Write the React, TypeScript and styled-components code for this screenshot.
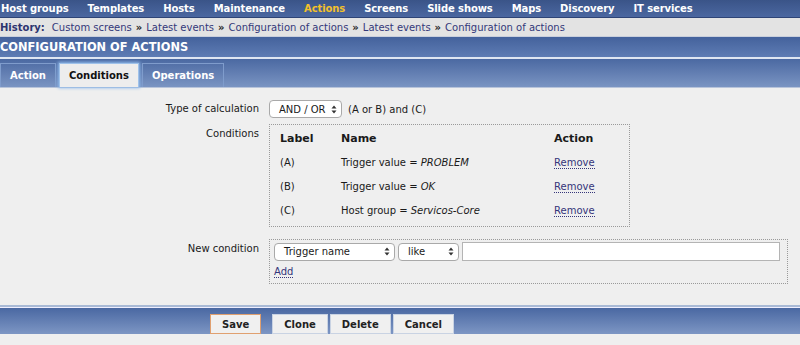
import { FC } from 'react';
import styled, { createGlobalStyle } from 'styled-components';

const GlobalStyle = createGlobalStyle`
  html, body {
    margin: 0;
    padding: 0;
    background: #efefef;
    font-family: 'DejaVu Sans', Verdana, sans-serif;
    font-size: 10px;
    color: #1a1a1a;
  }
`;

const MainMenu = styled.div`
  display: flex;
  gap: 19px;
  height: 17px;
  align-items: center;
  padding: 0 0 0 1px;
  background: linear-gradient(#3a5488, #4b67a0);
  border-bottom: 1px solid #2e4476;
`;

const MenuItem = styled.span<{ $active?: boolean }>`
  font-weight: bold;
  font-size: 10px;
  letter-spacing: -0.1px;
  color: ${({ $active }) => ($active ? '#f3c12a' : '#ffffff')};
  white-space: nowrap;
`;

const History = styled.div`
  display: flex;
  align-items: center;
  height: 18px;
  font-size: 10px;
  background: #e3e3e3;
  color: #2d3470;
  border-bottom: 1px solid #c9cfdc;
  white-space: nowrap;
`;

const HistoryTitle = styled.span`
  font-weight: bold;
  margin-right: 7px;
`;

const Crumb = styled.span`
  color: #34397a;
`;

const Sep = styled.span`
  margin: 0 4px;
  font-weight: bold;
  color: #222;
`;

const Header = styled.div`
  height: 20px;
  display: flex;
  align-items: center;
  background: linear-gradient(#44629c, #5e7cb4);
  color: #fff;
  font-weight: bold;
  font-size: 11.4px;
  border-bottom: 2px solid #dfe6f2;
`;

const TabBar = styled.div`
  display: flex;
  align-items: flex-end;
  gap: 3px;
  height: 28px;
  background: linear-gradient(#4b69a2, #7a94c2);
  border-bottom: 1px solid #b8c4da;
`;

const Tab = styled.div<{ $selected?: boolean }>`
  height: 24px;
  display: flex;
  align-items: center;
  padding: 0 9px;
  font-weight: bold;
  font-size: 10px;
  box-sizing: border-box;
  border: 1px solid ${({ $selected }) => ($selected ? '#9fc2ea' : '#7f9ccc')};
  border-bottom: none;
  color: ${({ $selected }) => ($selected ? '#111' : '#fff')};
  background: ${({ $selected }) => ($selected ? '#ededed' : 'transparent')};
  box-shadow: ${({ $selected }) => ($selected ? '0 0 3px 1px #8db8ea' : 'none')};
`;

const Body = styled.div`
  height: 217px;
  padding-top: 12px;
  box-sizing: border-box;
  background: #efefef;
`;

const Form = styled.div`
  display: grid;
  grid-template-columns: 259px 1fr;
  column-gap: 10px;
  row-gap: 6px;
  align-items: start;
`;

const Label = styled.div<{ $pad?: number; $top?: number }>`
  text-align: right;
  padding-top: ${({ $pad }) => $pad ?? 3}px;
  margin-top: ${({ $top }) => $top ?? 0}px;
`;

const Row = styled.div<{ $gap?: number }>`
  display: flex;
  align-items: center;
  gap: ${({ $gap }) => $gap ?? 6}px;
`;

const Select = styled.div<{ $w: number }>`
  width: ${({ $w }) => $w}px;
  height: 18px;
  box-sizing: border-box;
  border: 1px solid #a9a9a9;
  border-radius: 4px;
  background: #fff;
  display: flex;
  align-items: center;
  justify-content: space-between;
  padding: 0 4px 0 9px;
  font-size: 10px;
`;

const DottedBox = styled.div<{ $w: number; $top?: number }>`
  width: ${({ $w }) => $w}px;
  margin-top: ${({ $top }) => $top ?? 0}px;
  border: 1px dotted #9a9a9a;
  box-sizing: border-box;
`;

const CondGrid = styled.div`
  display: grid;
  grid-template-columns: 61px 213px auto;
  grid-auto-rows: 24px;
  align-items: center;
  padding: 1px 0 4px 10px;
  white-space: nowrap;
`;

const HeadCell = styled.div`
  font-weight: bold;
  font-size: 11px;
`;

const Link = styled.span`
  color: #35357a;
  border-bottom: 1px dotted #35357a;
`;

const NewCond = styled.div`
  display: flex;
  flex-direction: column;
  gap: 5px;
  padding: 2px 7px 6px 4px;
`;

const Input = styled.div`
  flex: 1;
  height: 19px;
  box-sizing: border-box;
  border: 1px solid #b4b4b4;
  background: #fff;
`;

const FooterLine = styled.div`
  height: 2px;
  background: #a9bad6;
  border-bottom: 1px solid #eef;
`;

const Footer = styled.div`
  height: 26px;
  display: flex;
  align-items: flex-end;
  gap: 2px;
  padding-left: 210px;
  background: linear-gradient(#4a68a2, #7d96c4);
`;

const Button = styled.div<{ $primary?: boolean; $gap?: number }>`
  height: 20px;
  box-sizing: border-box;
  padding: 0 11px;
  margin-right: ${({ $gap }) => $gap ?? 0}px;
  display: flex;
  align-items: center;
  font-weight: bold;
  font-size: 10px;
  color: #222;
  background: #f0f0f0;
  border: 1px solid ${({ $primary }) => ($primary ? '#e0a070' : '#c9d3e3')};
`;

const Tail = styled.div`
  height: 11px;
  background: #efefef;
`;

const menu = ['Host groups', 'Templates', 'Hosts', 'Maintenance', 'Actions', 'Screens', 'Slide shows', 'Maps', 'Discovery', 'IT services'];
const crumbs = ['Custom screens', 'Latest events', 'Configuration of actions', 'Latest events', 'Configuration of actions'];
const conditions = [
  { label: '(A)', name: 'Trigger value = ', value: 'PROBLEM' },
  { label: '(B)', name: 'Trigger value = ', value: 'OK' },
  { label: '(C)', name: 'Host group = ', value: 'Servicos-Core' },
];

const Updown = () => (
  <svg width="6" height="9" viewBox="0 0 6 9" style={{ marginLeft: 3, flex: 'none' }}>
    <path d="M3 0.5 L5.5 3.5 H0.5 Z M3 8.5 L5.5 5.5 H0.5 Z" fill="#333" />
  </svg>
);

const App: FC = () => (
  <>
    <GlobalStyle />
    <MainMenu>
      {menu.map((m) => (
        <MenuItem key={m} $active={m === 'Actions'}>
          {m}
        </MenuItem>
      ))}
    </MainMenu>
    <History>
      <HistoryTitle>History:</HistoryTitle>
      {crumbs.map((c, i) => (
        <span key={i}>
          {i > 0 && <Sep>»</Sep>}
          <Crumb>{c}</Crumb>
        </span>
      ))}
    </History>
    <Header>CONFIGURATION OF ACTIONS</Header>
    <TabBar>
      <Tab>Action</Tab>
      <Tab $selected>Conditions</Tab>
      <Tab>Operations</Tab>
    </TabBar>
    <Body>
      <Form>
        <Label>Type of calculation</Label>
        <Row>
          <Select $w={73}>
            <span>AND / OR</span>
            <Updown />
          </Select>
          <span>(A or B) and (C)</span>
        </Row>
        <Label $pad={4}>Conditions</Label>
        <DottedBox $w={361}>
          <CondGrid>
            <HeadCell>Label</HeadCell>
            <HeadCell>Name</HeadCell>
            <HeadCell>Action</HeadCell>
            {conditions.map((c) => [
              <div key={c.label + 'l'}>{c.label}</div>,
              <div key={c.label + 'n'}>
                {c.name}
                <i>{c.value}</i>
              </div>,
              <div key={c.label + 'a'}>
                <Link>Remove</Link>
              </div>,
            ])}
          </CondGrid>
        </DottedBox>
        <Label $pad={4} $top={6}>New condition</Label>
        <DottedBox $w={519} $top={6}>
          <NewCond>
            <Row $gap={3}>
              <Select $w={121}>
                <span>Trigger name</span>
                <Updown />
              </Select>
              <Select $w={61}>
                <span>like</span>
                <Updown />
              </Select>
              <Input />
            </Row>
            <span>
              <Link>Add</Link>
            </span>
          </NewCond>
        </DottedBox>
      </Form>
    </Body>
    <FooterLine />
    <Footer>
      <Button $primary $gap={9}>Save</Button>
      <Button>Clone</Button>
      <Button>Delete</Button>
      <Button>Cancel</Button>
    </Footer>
    <Tail />
  </>
);

export default App;
